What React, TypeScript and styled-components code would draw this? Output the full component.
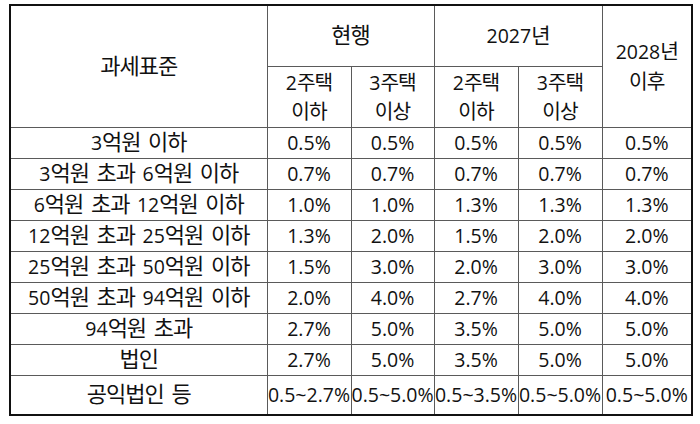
import React from 'react'
import styled, { createGlobalStyle } from 'styled-components'

const GlobalStyle = createGlobalStyle`
  html, body {
    margin: 0;
    padding: 0;
    background: #fff;
  }
`

const Page = styled.div`
  padding: 4px 0 0 9px;
  font-family: 'Open Sans', 'Noto Sans CJK KR', sans-serif;
  font-size: 19.5px;
  color: #111;
`

const Table = styled.table`
  border-collapse: collapse;
  table-layout: fixed;
  width: 682px;
  border: 2px solid #111;
`

const HeadCell = styled.th<{ $height?: number }>`
  font-weight: 400;
  border: 1px solid #5a5a5a;
  padding: 0;
  height: ${p => p.$height ?? 60}px;
  line-height: 29.5px;
  text-align: center;
  vertical-align: middle;
`

const Label = styled.td<{ $tall?: boolean }>`
  border: 1px solid #5a5a5a;
  padding: 0;
  height: ${p => (p.$tall ? 38 : 30)}px;
  line-height: 28px;
  text-align: center;
  word-spacing: 2.5px;
  white-space: nowrap;
`

const Cell = styled.td`
  border: 1px solid #5a5a5a;
  padding: 0;
  line-height: 28px;
  text-align: center;
  white-space: nowrap;
`

// Hangul runs are set larger and tighter, as the source font draws them
const Ko = styled.span<{ $size: number }>`
  font-family: 'Noto Sans CJK KR', sans-serif;
  font-size: ${p => p.$size}px;
  letter-spacing: -1px;
  line-height: 1;
`

const korean = (text: string, size = 22) =>
  text.split(/([가-힣]+)/).map((part, i) =>
    /[가-힣]/.test(part) ? (
      <Ko key={i} $size={size}>
        {part}
      </Ko>
    ) : (
      part
    ),
  )

type Row = { label: string; values: string[] }

const rows: Row[] = [
  { label: '3억원 이하', values: ['0.5%', '0.5%', '0.5%', '0.5%', '0.5%'] },
  { label: '3억원 초과 6억원 이하', values: ['0.7%', '0.7%', '0.7%', '0.7%', '0.7%'] },
  { label: '6억원 초과 12억원 이하', values: ['1.0%', '1.0%', '1.3%', '1.3%', '1.3%'] },
  { label: '12억원 초과 25억원 이하', values: ['1.3%', '2.0%', '1.5%', '2.0%', '2.0%'] },
  { label: '25억원 초과 50억원 이하', values: ['1.5%', '3.0%', '2.0%', '3.0%', '3.0%'] },
  { label: '50억원 초과 94억원 이하', values: ['2.0%', '4.0%', '2.7%', '4.0%', '4.0%'] },
  { label: '94억원 초과', values: ['2.7%', '5.0%', '3.5%', '5.0%', '5.0%'] },
  { label: '법인', values: ['2.7%', '5.0%', '3.5%', '5.0%', '5.0%'] },
  { label: '공익법인 등', values: ['0.5~2.7%', '0.5~5.0%', '0.5~3.5%', '0.5~5.0%', '0.5~5.0%'] },
]

const widths = [257, 84, 83, 84, 84, 90]

// two-line header text
const stacked = (top: string, bottom: string) => (
  <>
    {korean(top, 20.3)}
    <br />
    {korean(bottom, 20.3)}
  </>
)

export default function App() {
  return (
    <Page>
      <GlobalStyle />
      <Table>
        <colgroup>
          {widths.map((w, i) => (
            <col key={i} style={{ width: w }} />
          ))}
        </colgroup>
        <thead>
          <tr>
            <HeadCell rowSpan={2}>{korean('과세표준')}</HeadCell>
            <HeadCell colSpan={2}>{korean('현행')}</HeadCell>
            <HeadCell colSpan={2}>{korean('2027년', 21)}</HeadCell>
            <HeadCell rowSpan={2}>{stacked('2028년', '이후')}</HeadCell>
          </tr>
          <tr>
            <HeadCell $height={60}>{stacked('2주택', '이하')}</HeadCell>
            <HeadCell $height={60}>{stacked('3주택', '이상')}</HeadCell>
            <HeadCell $height={60}>{stacked('2주택', '이하')}</HeadCell>
            <HeadCell $height={60}>{stacked('3주택', '이상')}</HeadCell>
          </tr>
        </thead>
        <tbody>
          {rows.map((r, i) => (
            <tr key={r.label}>
              <Label $tall={i === rows.length - 1}>{korean(r.label)}</Label>
              {r.values.map((v, j) => (
                <Cell key={j}>{v}</Cell>
              ))}
            </tr>
          ))}
        </tbody>
      </Table>
    </Page>
  )
}
